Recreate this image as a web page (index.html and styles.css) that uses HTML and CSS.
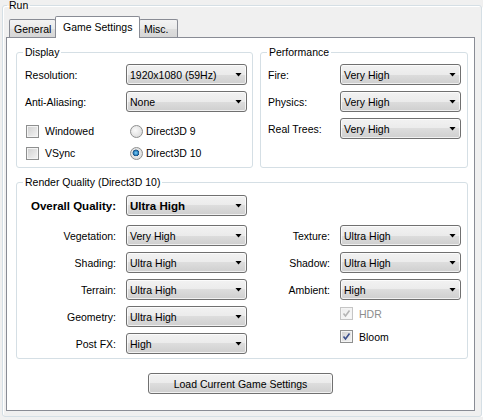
FILE: index.html
```html
<!DOCTYPE html>
<html>
  <head>
    <title>Run</title>
    <link rel="stylesheet" href="styles.css">
  </head>
  <body>
    <fieldset class="group run-group">
      <legend class="run-legend">Run</legend>
      <div class="run-body">
        <div class="tab-strip">
          <div class="tab tab-general">General</div>
          <div class="tab tab-game active">Game Settings</div>
          <div class="tab tab-misc">Misc.</div>
        </div>

        <div class="tab-panel">
          <div class="top-row">
            <fieldset class="group display-group">
              <legend>Display</legend>
              <div class="form-grid display-grid">
                <span class="field-label">Resolution:</span>
                <div class="combo">1920x1080 (59Hz)</div>
                <span class="field-label">Anti-Aliasing:</span>
                <div class="combo">None</div>

                <div class="check check-row">
                  <span class="box"></span>Windowed
                </div>
                <div class="radio radio-row">
                  <span class="dot"></span>Direct3D 9
                </div>
                <div class="check">
                  <span class="box"></span>VSync
                </div>
                <div class="radio">
                  <span class="dot checked"></span>Direct3D 10
                </div>
              </div>
            </fieldset>

            <fieldset class="group perf-group">
              <legend>Performance</legend>
              <div class="form-grid perf-grid">
                <span class="field-label">Fire:</span>
                <div class="combo">Very High</div>
                <span class="field-label">Physics:</span>
                <div class="combo">Very High</div>
                <span class="field-label">Real Trees:</span>
                <div class="combo">Very High</div>
              </div>
            </fieldset>
          </div>

          <fieldset class="group render-group">
            <legend>Render Quality (Direct3D 10)</legend>
            <div class="render-grid">
              <span class="field-label right row-start overall-label">Overall Quality:</span>
              <div class="combo bold overall-combo">Ultra High</div>

              <span class="field-label right row-start">Vegetation:</span>
              <div class="combo">Very High</div>
              <span class="field-label right">Texture:</span>
              <div class="combo">Ultra High</div>

              <span class="field-label right row-start">Shading:</span>
              <div class="combo">Ultra High</div>
              <span class="field-label right">Shadow:</span>
              <div class="combo">Ultra High</div>

              <span class="field-label right row-start">Terrain:</span>
              <div class="combo">Ultra High</div>
              <span class="field-label right">Ambient:</span>
              <div class="combo">High</div>

              <span class="field-label right row-start">Geometry:</span>
              <div class="combo">Ultra High</div>
              <div class="effects">
                <div class="check disabled">
                  <span class="box">
                    <svg width="11" height="11" viewBox="0 0 11 11"><path d="M2.5 5.5 L4.5 8 L8.5 2.5" fill="none" stroke="#b4b4b4" stroke-width="1.6"/></svg>
                  </span>HDR
                </div>
                <div class="check">
                  <span class="box">
                    <svg width="11" height="11" viewBox="0 0 11 11"><path d="M2.5 5.5 L4.5 8 L8.5 2.5" fill="none" stroke="#3b4f8c" stroke-width="1.6"/></svg>
                  </span>Bloom
                </div>
              </div>

              <span class="field-label right row-start">Post FX:</span>
              <div class="combo">High</div>
            </div>
          </fieldset>

          <div class="actions">
            <button class="button">Load Current Game Settings</button>
          </div>
        </div>
      </div>
    </fieldset>
  </body>
</html>
```

FILE: styles.css
```css
body {
  margin: 0;
  background-color: #f0f0f0;
  font-family: "Liberation Sans", Arial, sans-serif;
  font-size: 10.5px;
  color: #000;
}

.group {
  margin: 0;
  padding: 0;
  min-width: 0;
  border: 1px solid #d5dfe5;
  border-radius: 3px;
}

.group legend {
  margin-left: 6px;
  padding: 0 2px;
  line-height: 12px;
}

.run-group {
  box-sizing: border-box;
  width: 480px;
  margin-left: 2px;
  box-shadow: inset 1px 1px #fff, 1px 1px #fff;
}

.group .run-legend {
  margin-left: 4px;
  line-height: 11px;
}

.run-body {
  padding: 5px 6px 5px 3px;
}

/* tabs */
.tab-strip {
  position: relative;
  z-index: 1;
  display: flex;
  align-items: flex-end;
  height: 22px;
  margin-left: 3px;
  margin-bottom: -1px;
}

.tab {
  box-sizing: border-box;
  display: flex;
  align-items: center;
  height: 18px;
  margin-bottom: 1px;
  padding-left: 4px;
  border: 1px solid #898c95;
  border-bottom: none;
  border-radius: 2px 2px 0 0;
  background: linear-gradient(#f3f3f3, #eaeaea 50%, #dedede 50%, #d6d6d6);
}

.tab + .tab {
  margin-left: -1px;
}

.tab-general {
  width: 47px;
}

.tab-game {
  width: 85px;
}

.tab-misc {
  width: 39px;
}

.tab.active {
  height: 22px;
  margin-bottom: 0;
  padding-left: 7px;
  padding-bottom: 2px;
  background: #fff;
}

.tab-panel {
  background-color: #fff;
  border: 1px solid #898c95;
  padding: 8px 6px 16px 9px;
}

.top-row {
  display: flex;
  gap: 7px;
}

.display-group {
  box-sizing: border-box;
  width: 237px;
}

.perf-group {
  flex: 1;
}

.render-group {
  margin-top: 8px;
}

/* form rows */
.form-grid {
  display: grid;
  column-gap: 10px;
  row-gap: 6px;
  padding: 6px 0 6px 8px;
}

.display-grid {
  grid-template-columns: 91px 121px;
  grid-template-rows: 21px 21px 21px 16px;
}

.perf-grid {
  grid-template-columns: 62px 121px;
  grid-template-rows: 21px 21px 21px;
  padding-left: 7px;
}

.render-grid {
  display: grid;
  grid-template-columns: 99px 121px 73px 121px;
  grid-template-rows: 24px repeat(5, 21px);
  column-gap: 10px;
  row-gap: 6px;
  padding: 7px 0 4px 0;
}

.row-start {
  grid-column: 1;
}

.field-label {
  display: flex;
  align-items: center;
  white-space: nowrap;
}

.field-label.right {
  justify-content: flex-end;
}

.overall-label {
  align-self: start;
  height: 21px;
  font-size: 11.5px;
  font-weight: bold;
}

.overall-combo {
  grid-column: 2;
  align-self: start;
}

.combo {
  box-sizing: border-box;
  display: flex;
  align-items: center;
  height: 21px;
  padding-left: 3px;
  border: 1px solid #707070;
  border-radius: 3px;
  background: linear-gradient(#f2f2f2, #ebebeb 50%, #dddddd 50%, #cfcfcf);
  box-shadow: inset 0 0 0 1px rgba(255, 255, 255, 0.7);
  white-space: nowrap;
}

.combo::after {
  content: "";
  width: 7px;
  height: 4px;
  margin-left: auto;
  margin-right: 4px;
  background-color: #000;
  clip-path: polygon(0 0, 100% 0, 50% 100%);
}

.combo.bold {
  font-size: 11.5px;
  font-weight: bold;
}

/* checks and radios */
.check,
.radio {
  display: flex;
  align-items: center;
  white-space: nowrap;
}

.check-row,
.radio-row {
  align-self: end;
  height: 16px;
}

.check-row,
.display-grid > .check {
  margin-left: 1px;
}

.radio {
  margin-left: 4px;
}

.box {
  box-sizing: border-box;
  display: flex;
  align-items: center;
  justify-content: center;
  width: 13px;
  height: 13px;
  margin-right: 6px;
  border: 1px solid #8e8f8f;
  background: linear-gradient(135deg, #cfcfcf, #f5f5f5);
  box-shadow: inset 0 0 0 1px #f4f4f4;
}

.check.disabled {
  color: #8d8d8d;
}

.check.disabled .box {
  border-color: #c5c5c5;
  background: linear-gradient(135deg, #ececec, #fafafa);
}

.dot {
  box-sizing: border-box;
  width: 13px;
  height: 13px;
  margin-right: 3px;
  border: 1px solid #8e8f8f;
  border-radius: 50%;
  background: radial-gradient(circle at 40% 40%, #fafafa, #d4d4d4);
}

.dot.checked {
  background: radial-gradient(circle at 45% 45%, #7fd3f7 0, #2b80c0 25%, #123f6a 38%, #e8e8e8 42%, #d4d4d4 100%);
}

.effects {
  grid-column: 4;
  grid-row: 5 / span 2;
  display: flex;
  flex-direction: column;
  gap: 10px;
  padding-top: 1px;
}

.effects .check {
  height: 13px;
}

/* button */
.actions {
  display: flex;
  margin-top: 14px;
  padding-left: 132px;
}

.button {
  box-sizing: border-box;
  width: 185px;
  height: 21px;
  padding: 0;
  border: 1px solid #707070;
  border-radius: 3px;
  background: linear-gradient(#f2f2f2, #ebebeb 50%, #dddddd 50%, #cfcfcf);
  box-shadow: inset 0 0 0 1px rgba(255, 255, 255, 0.7);
  font-family: inherit;
  font-size: 10.5px;
  color: #000;
}
```
